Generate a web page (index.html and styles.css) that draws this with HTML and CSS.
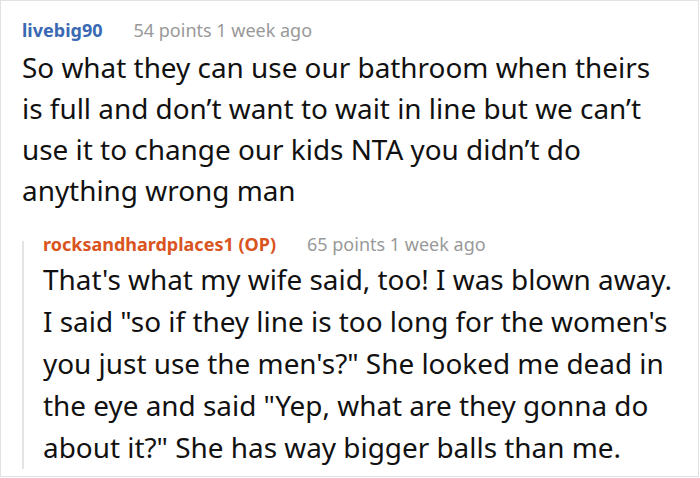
FILE: index.html
```html
<!DOCTYPE html>
<html>
<head>
<meta charset="utf-8">
<link rel="stylesheet" href="styles.css">
</head>
<body>
<div class="thread">
  <div class="comment">
    <div class="meta">
      <span class="user user-blue">livebig90</span>
      <span class="info">54 points 1 week ago</span>
    </div>
    <div class="text">So what they can use our bathroom when theirs is full and don’t want to wait in line but we can’t use it to change our kids NTA you didn’t do anything wrong man</div>
    <div class="reply">
      <div class="meta">
        <span class="user user-op">rocksandhardplaces1 (OP)</span>
        <span class="info">65 points 1 week ago</span>
      </div>
      <div class="text">That's what my wife said, too! I was blown away. I said "so if they line is too long for the women's you just use the men's?" She looked me dead in the eye and said "Yep, what are they gonna do about it?" She has way bigger balls than me.</div>
    </div>
  </div>
</div>
</body>
</html>
```

FILE: styles.css
```css
html, body {
  margin: 0;
  padding: 0;
  background: #fff;
}
body {
  font-family: "Noto Sans", "DejaVu Sans", sans-serif;
}
.thread {
  width: 699px;
  height: 477px;
  box-sizing: border-box;
  border: 1px solid #e2e2e2;
  padding: 15.7px 24px 0 21px;
  overflow: hidden;
}
.meta {
  display: flex;
  align-items: baseline;
  gap: 31px;
  height: 26px;
  line-height: 26px;
}
.user {
  font-weight: 700;
  font-size: 18px;
}
.user-blue { color: #3a69b4; }
.user-op { color: #d9541e; }
.info {
  color: #999;
  font-size: 18px;
}
.text {
  font-size: 27.9px;
  line-height: 41px;
  color: #111;
  margin-top: 4.3px;
}
.reply {
  display: flex;
  flex-direction: column;
  margin-top: 30px;
  border-left: 2px solid #e4e4e4;
  padding-left: 19px;
  height: 228px;
}
.reply .meta {
  margin-top: -10px;
}
.reply .text {
  line-height: 42px;
  margin-top: 1px;
}
```
